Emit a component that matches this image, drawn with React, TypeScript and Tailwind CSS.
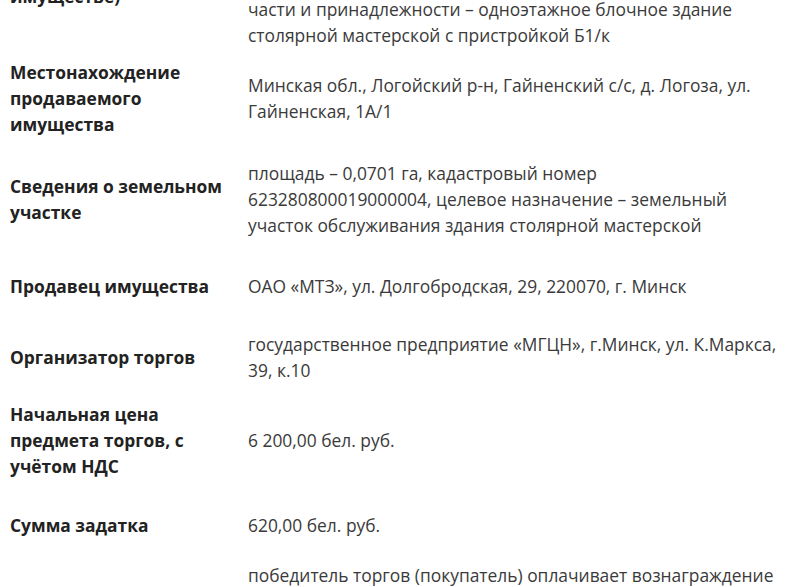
const rows: { label: React.ReactNode; value: React.ReactNode; pad: string }[] = [
  {
    label: (
      <>
        Предмет торгов
        <br />
        (сведения об
        <br />
        имуществе)
      </>
    ),
    value: (
      <>
        капитальное строение с инвентарным номером 600/С-45821,
        <br />
        назначение – здание специализированное для обработки
        <br />
        древесины, площадь 96,4 кв.м, со всеми его составными
        <br />
        частями, включая следующие составные
        <br />
        части и принадлежности – одноэтажное блочное здание
        <br />
        столярной мастерской с пристройкой Б1/к
      </>
    ),
    pad: 'pt-0 pb-0 -mt-[108px]',
  },
  {
    label: 'Местонахождение продаваемого имущества',
    value: 'Минская обл., Логойский р-н, Гайненский с/с, д. Логоза, ул. Гайненская, 1А/1',
    pad: 'pt-[11px] pb-[12px]',
  },
  {
    label: 'Сведения о земельном участке',
    value:
      'площадь – 0,0701 га, кадастровый номер 623280800019000004, целевое назначение – земельный участок обслуживания здания столярной мастерской',
    pad: 'pt-[11px] pb-[12px]',
  },
  {
    label: 'Продавец имущества',
    value: 'ОАО «МТЗ», ул. Долгобродская, 29, 220070, г. Минск',
    pad: 'py-[23px]',
  },
  {
    label: 'Организатор торгов',
    value: 'государственное предприятие «МГЦН», г.Минск, ул. К.Маркса, 39, к.10',
    pad: 'py-[9px]',
  },
  {
    label: 'Начальная цена предмета торгов, с учётом НДС',
    value: '6 200,00 бел. руб.',
    pad: 'py-[9px]',
  },
  {
    label: 'Сумма задатка',
    value: '620,00 бел. руб.',
    pad: 'py-[24px]',
  },
  {
    label: 'Вознаграждение организатора торгов',
    value:
      'победитель торгов (покупатель) оплачивает вознаграждение организатору торгов и возмещает затраты на организацию и проведение торгов, в том числе расходы, связанные с изготовлением и предоставлением участникам торгов документации',
    pad: 'pt-0',
  },
]

export default function App() {
  return (
    <div className="h-[587px] w-[796px] overflow-hidden bg-white font-['Open_Sans',sans-serif] text-[17.4px] leading-[26px]">
      {rows.map((row, i) => (
        <div key={i} className={`flex items-center ${row.pad}`}>
          <div className="w-[238px] shrink-0 pl-[10px] pr-3 font-bold text-[#222]">{row.label}</div>
          <div className="w-[543px] shrink-0 pl-[10px] text-[#3a3a3a]">{row.value}</div>
        </div>
      ))}
    </div>
  )
}
